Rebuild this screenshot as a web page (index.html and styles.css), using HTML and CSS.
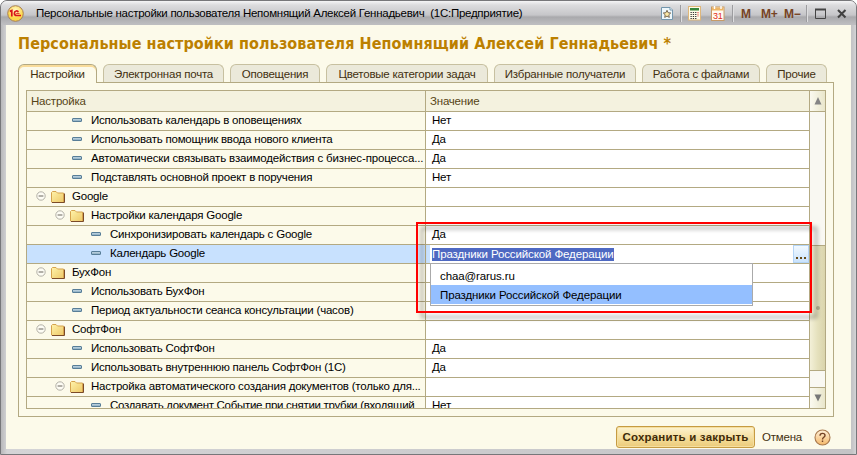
FILE: index.html
```
<!DOCTYPE html>
<html lang="ru">
<head>
<meta charset="utf-8">
<title>Персональные настройки</title>
<link rel="stylesheet" href="styles.css">
</head>
<body>
<svg width="0" height="0" class="defs">
  <defs>
    <linearGradient id="fold" x1="0" y1="0" x2="1" y2="1"><stop offset="0" stop-color="#fff3ab"/><stop offset="1" stop-color="#edc867"/></linearGradient>
    <linearGradient id="bar" x1="0" y1="0" x2="0" y2="1"><stop offset="0" stop-color="#cfe0ea"/><stop offset="1" stop-color="#7fa3ba"/></linearGradient>
    <radialGradient id="sun" cx=".5" cy=".3"><stop offset="0" stop-color="#fff9c9"/><stop offset="1" stop-color="#fcd649"/></radialGradient>
    <linearGradient id="orb" x1="0" y1="0" x2="0" y2="1"><stop offset="0" stop-color="#fff0d8"/><stop offset="1" stop-color="#f5b96a"/></linearGradient>
    <symbol id="folder" viewBox="0 0 14 12"><path d="M.5 11V1.5L1.5.5H5L6.5 2H12.5V11.5H1z" fill="url(#fold)" stroke="#d5a34d"/><path d="M13.5 2.5V11.5H1" fill="none" stroke="#7b4a28"/></symbol>
    <symbol id="minus" viewBox="0 0 10 10"><circle cx="5" cy="5" r="4.2" fill="#fdfcf4" stroke="#aaa89e" stroke-width=".9"/><path d="M2.6 5H7.4" stroke="#68655c"/></symbol>
    <symbol id="item" viewBox="0 0 10 5"><rect x=".5" y=".5" width="9" height="3" rx=".5" fill="url(#bar)" stroke="#587e98"/></symbol>
  </defs>
</svg>
<div class="window">
  <header class="titlebar">
    <svg class="logo" width="17" height="17" viewBox="0 0 17 17"><circle cx="8.5" cy="8.5" r="7.8" fill="url(#sun)" stroke="#a87f55"/><path d="M2.8 6.4 4.8 5.6V11.4" fill="none" stroke="#d9151c" stroke-width="1.7"/><path d="M11.2 7.2C10.8 5.4 7.4 5.4 7.4 8.2 7.4 9.8 8.4 10.5 9.6 10.5H14" fill="none" stroke="#d9151c" stroke-width="1.7"/><path d="M9.2 8.5H12.5" stroke="#d9151c" stroke-width=".8"/></svg>
    <span class="caption">Персональные настройки пользователя Непомнящий Алексей Геннадьевич &nbsp;(1С:Предприятие)</span>
    <div class="tools">
      <svg class="star" width="14" height="15" viewBox="0 0 14 15"><path d="M1.5 1.5H10L12.5 4V13.5H1.5z" fill="#eef7fb" stroke="#7396ad"/><path d="M10 1.5V4H12.5" fill="#fff" stroke="#7396ad"/><path d="M7 4.3 8.1 6.7 10.7 7 8.8 8.8 9.3 11.4 7 10.1 4.7 11.4 5.2 8.8 3.3 7 5.9 6.7z" fill="#fde9a7" stroke="#6c5a43" stroke-width=".9"/></svg>
      <i class="sep s1"></i>
      <svg class="calc" width="14" height="15" viewBox="0 0 14 15"><rect x=".5" y=".5" width="12" height="13.5" fill="#fffbe6" stroke="#dfb77b"/><rect x="2" y="2" width="9" height="2.5" fill="#35863b"/><path d="M2.5 6.5H8.5M2.5 8.5H8.5M2.5 10.5H8.5M2.5 12.5H8.5" stroke="#333" stroke-dasharray="1.3 1"/><path d="M10 6V11" stroke="#d33" stroke-dasharray="1.3 1"/></svg>
      <svg class="cal" width="14" height="15" viewBox="0 0 14 15"><rect x=".5" y="1" width="12.5" height="13.5" fill="#fffaf0" stroke="#c79b67"/><rect x="1" y="1.5" width="11.5" height="3" fill="#edb566"/><path d="M3.5 0V3M10 0V3" stroke="#fff" stroke-width="1.4"/><text x="6.8" y="13" text-anchor="middle" class="day">31</text></svg>
      <i class="sep s2"></i>
      <b class="m">M</b><b class="mp">M+</b><b class="mm">M−</b>
      <i class="sep s3"></i>
      <svg class="max" width="12" height="12" viewBox="0 0 12 12"><path d="M.5 2V10.5H10.5V2" fill="none" stroke="#444"/><path d="M0 1.5H11" stroke="#444" stroke-width="2"/></svg>
      <svg class="close" width="10" height="10" viewBox="0 0 10 10"><path d="M1 1 8.5 8.5M8.5 1 1 8.5" stroke="#414141" stroke-width="2.1"/></svg>
    </div>
  </header>
  <main class="content">
    <h1><span>Персональные настройки пользователя Непомнящий Алексей Геннадьевич *</span></h1>
    <nav class="tabs">
      <span class="tab t1 active">Настройки</span><span class="tab t2">Электронная почта</span><span class="tab t3">Оповещения</span><span class="tab t4">Цветовые категории задач</span><span class="tab t5">Избранные получатели</span><span class="tab t6">Работа с файлами</span><span class="tab t7">Прочие</span>
    </nav>
    <section class="panel">
      <div class="table">
        <div class="grid">
          <div class="row head"><div class="name">Настройка</div><div class="value">Значение</div></div>
          <div class="row"><div class="name l2"><svg class="it"><use href="#item"/></svg><span>Использовать календарь в оповещениях</span></div><div class="value">Нет</div></div>
          <div class="row"><div class="name l2"><svg class="it"><use href="#item"/></svg><span>Использовать помощник ввода нового клиента</span></div><div class="value">Да</div></div>
          <div class="row"><div class="name l2"><svg class="it"><use href="#item"/></svg><span class="wide">Автоматически связывать взаимодействия с бизнес-процесса...</span></div><div class="value">Да</div></div>
          <div class="row"><div class="name l2"><svg class="it"><use href="#item"/></svg><span>Подставлять основной проект в поручения</span></div><div class="value">Нет</div></div>
          <div class="row"><div class="name l0"><svg class="mi"><use href="#minus"/></svg><svg class="fo"><use href="#folder"/></svg><span>Google</span></div><div class="value"></div></div>
          <div class="row"><div class="name l1"><svg class="mi"><use href="#minus"/></svg><svg class="fo"><use href="#folder"/></svg><span>Настройки календаря Google</span></div><div class="value"></div></div>
          <div class="row"><div class="name l3"><svg class="it"><use href="#item"/></svg><span>Синхронизировать календарь с Google</span></div><div class="value">Да</div></div>
          <div class="row selected"><div class="name l3"><svg class="it"><use href="#item"/></svg><span>Календарь Google</span></div>
            <div class="value editing"><div class="field"><mark>Праздники Российской Федерации</mark><button class="pick"><i></i><i></i><i></i></button></div>
              <div class="dropdown"><div class="option">chaa@rarus.ru</div><div class="option current">Праздники Российской Федерации</div></div>
              <div class="frame"></div>
            </div></div>
          <div class="row"><div class="name l0"><svg class="mi"><use href="#minus"/></svg><svg class="fo"><use href="#folder"/></svg><span>БухФон</span></div><div class="value"></div></div>
          <div class="row"><div class="name l2"><svg class="it"><use href="#item"/></svg><span>Использовать БухФон</span></div><div class="value"></div></div>
          <div class="row"><div class="name l2"><svg class="it"><use href="#item"/></svg><span>Период актуальности сеанса консультации (часов)</span></div><div class="value"></div></div>
          <div class="row"><div class="name l0"><svg class="mi"><use href="#minus"/></svg><svg class="fo"><use href="#folder"/></svg><span>СофтФон</span></div><div class="value"></div></div>
          <div class="row"><div class="name l2"><svg class="it"><use href="#item"/></svg><span>Использовать СофтФон</span></div><div class="value">Да</div></div>
          <div class="row"><div class="name l2"><svg class="it"><use href="#item"/></svg><span>Использовать внутреннюю панель СофтФон (1С)</span></div><div class="value">Да</div></div>
          <div class="row"><div class="name l1"><svg class="mi"><use href="#minus"/></svg><svg class="fo"><use href="#folder"/></svg><span>Настройка автоматического создания документов (только для...</span></div><div class="value"></div></div>
          <div class="row last"><div class="name l3"><svg class="it"><use href="#item"/></svg><span class="tight">Создавать документ Событие при снятии трубки (входящий</span></div><div class="value">Нет</div></div>
        </div>
        <div class="scroll">
          <div class="arrow up"><svg width="8" height="8" viewBox="0 0 8 8"><path d="M4 0 7.5 7.5H.5z" fill="#858585"/></svg></div>
          <div class="track"></div>
          <div class="thumb"><i></i></div>
          <div class="rest"></div>
          <div class="arrow down"><svg width="8" height="8" viewBox="0 0 8 8"><path d="M4 7.5 7.5 .5H.5z" fill="#777"/></svg></div>
        </div>
      </div>
    </section>
    <footer class="actions">
      <button class="save"><span>Сохранить и закрыть</span></button>
      <span class="cancel">Отмена</span>
      <svg class="help" width="17" height="17" viewBox="0 0 17 17"><circle cx="8.5" cy="8.5" r="7.5" fill="url(#orb)" stroke="#a9794d" stroke-width="1.1"/><path d="M6 6.7C6 3.5 11 3.7 11 6.5 11 8.3 8.5 8.2 8.5 10.4M8.5 11.5V13" fill="none" stroke="#744326" stroke-width="1.4"/></svg>
    </footer>
  </main>
</div>
</body>
</html>
```
FILE: styles.css
```
* { box-sizing: border-box; }
body { margin: 0; background: #fff; font: 11.5px/18px "Liberation Sans", Arial, sans-serif; letter-spacing: -0.21px; color: #000; overflow: hidden; }
svg { display: block; flex: none; }
.defs { position: absolute; }
button { font: inherit; letter-spacing: inherit; padding: 0; margin: 0; }
.window { width: 857px; height: 455px; display: flex; flex-direction: column; background: linear-gradient(90deg, #b8b8ba, #d4d4d6 6px, #c4c4c6 851px, #d4d4d6); border: 1px solid #77777a; border-radius: 7px 7px 0 0; padding: 0 5px; overflow: hidden; }
.titlebar { height: 24px; margin: 0 -5px; padding: 1px 5px 0 6px; display: flex; align-items: center; flex: none; background: linear-gradient(#f5f5f6, #dcdcde 4px, #c6c6c9 14px, #a9a9ac 16px, #bdbdc0 23px); }
.caption { margin-left: 12px; white-space: nowrap; position: relative; top: -1px; letter-spacing: -.27px; }
.tools { margin-left: auto; display: flex; align-items: center; height: 23px; }
.sep { width: 2px; height: 17px; background: #9c9c9f; border-right: 1px solid #dedee0; }
.s1 { margin: 0 6px 0 6px; }
.s2 { margin: 0 7px 0 7px; }
.s3 { margin: 0 7px 0 6px; }
.cal { margin-left: 9px; }
.day { font: 9px "Liberation Sans", sans-serif; fill: #e22b16; }
.tools b { color: #764324; font: bold 12px/20px "Liberation Sans", sans-serif; white-space: nowrap; letter-spacing: -.2px; }
.m { width: 10px; }
.mp { margin-left: 10px; width: 17px; }
.mm { margin-left: 6px; width: 16px; }
.close { margin: 0 4px 0 10px; }
.content { width: 845px; height: 424px; background: #fcfaea; padding: 0 18px 0 12px; display: flex; flex-direction: column; }
h1 { margin: 0; height: 39px; padding-top: 8px; font: bold 16px/22px "DejaVu Sans Condensed", "DejaVu Sans", sans-serif; font-stretch: condensed; color: #bc8000; letter-spacing: .08px; white-space: nowrap; }
.tabs { display: flex; gap: 6px; height: 19px; margin-bottom: -1px; position: relative; flex: none; }
.tab { height: 18px; border: 1px solid #c7c0a0; border-bottom: 0; border-radius: 6px 6px 0 0; background: #ebe9da; color: #433010; text-align: center; line-height: 18px; white-space: nowrap; }
.t1 { width: 79px; } .t2 { width: 121px; } .t3 { width: 90px; } .t4 { width: 162px; } .t5 { width: 142px; } .t6 { width: 118px; } .t7 { width: 61px; }
.tab.active { height: 19px; background: #fcfaea; border-color: #b3a982; box-shadow: inset 0 2px #f9dc9b; }
.panel { width: 816px; height: 335px; border: 1px solid #b3a982; padding: 7px; flex: none; }
.table { width: 800px; height: 319px; border: 1px solid #b3a982; display: flex; }
.grid { width: 783px; height: 317px; border-right: 1px solid #b3a982; }
.row { display: flex; height: 19px; border-bottom: 1px solid #b3a982; }
.name { width: 399px; border-right: 1px solid #b3a982; display: flex; align-items: center; white-space: nowrap; overflow: hidden; }
.name span { position: relative; top: -1px; }
.name .wide { letter-spacing: -.15px; }
.name .tight { letter-spacing: -.3px; }
.value { flex: 1; background: #fff; padding-left: 6px; line-height: 16px; white-space: nowrap; }
.head { height: 21px; background: #f4f2df; color: #564416; }
.head .name { padding-left: 4px; }
.head .value { background: none; padding-left: 4px; line-height: 20px; }
.last { height: 11px; overflow: hidden; border-bottom: 0; }
.last .name { height: 18px; }
.mi { width: 10px; height: 10px; margin: -2px 10px 0 0; }
.fo { width: 14px; height: 12px; margin: 0 7px 0 -5px; }
.it { width: 10px; height: 5px; margin: -2px 9px 0 0; }
.l0 { padding-left: 9px; }
.l1 { padding-left: 28px; }
.l2 { padding-left: 45px; }
.l3 { padding-left: 64px; }
.selected .name { background: #c8e1fe; }
.editing { position: relative; padding-left: 4px; background: #c8e1fe; letter-spacing: -.12px; }
.field { height: 18px; background: #fff; display: flex; align-items: center; padding-left: 2px; }
mark { background: #4e69c2; color: #fff; height: 13px; line-height: 13px; width: 182px; }
.pick { margin-left: auto; width: 16px; height: 18px; border: 1px solid #b4d5f7; background: linear-gradient(#f2f9ff, #cae3fd); display: flex; gap: 2px; align-items: flex-end; justify-content: center; padding-bottom: 3px; }
.pick i { width: 2px; height: 2px; background: #684a16; }
.dropdown { position: absolute; left: 4px; top: 18px; width: 323px; height: 43px; border: 1px solid #aaa; background: #fff; padding-top: 3px; z-index: 1; }
.option { height: 18px; line-height: 18px; padding-left: 9px; }
.option.current { background: #94bfff; height: 19px; line-height: 20px; }
.frame { position: absolute; left: -10px; top: -23px; width: 396px; height: 91px; border: 2px solid #f00; filter: drop-shadow(5px 5px 2px rgba(0, 0, 0, .4)); z-index: 2; }
.scroll { width: 15px; display: flex; flex-direction: column; }
.arrow { height: 20px; display: flex; align-items: center; justify-content: center; background: linear-gradient(90deg, #fbfaf0, #e9e6cb); }
.up { border-bottom: 1px solid #b3a982; height: 21px; }
.down { border-top: 1px solid #b3a982; height: 21px; }
.track { height: 133px; background: #f9f8f2; }
.thumb { height: 126px; border: 1px solid #b3a982; border-width: 1px 0; background: linear-gradient(90deg, #f3f0d8, #e5e1bd 50%, #dad4ab); display: flex; align-items: center; justify-content: center; }
.thumb i { width: 4px; height: 4px; border-radius: 2px; background: #b4af91; }
.rest { height: 16px; background: #f9f8f2; }
.actions { display: flex; align-items: center; justify-content: flex-end; height: 22px; margin-top: 9px; }
.save { width: 139px; height: 22px; border: 1px solid #c69b42; border-radius: 3px; background: linear-gradient(#fdf3d0, #f2d890 70%, #ebca79); color: #3f2b08; font-weight: bold; letter-spacing: .2px; box-shadow: inset 0 0 0 1px #f5dfa0; }
.cancel { margin-left: 7px; width: 52px; color: #433010; }
.help { margin: 0 2px 0 0; }
```
